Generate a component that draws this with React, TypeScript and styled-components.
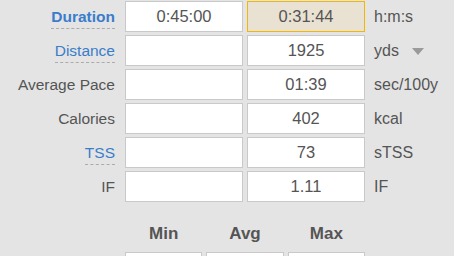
import React from "react";
import styled, { createGlobalStyle } from "styled-components";

const GlobalStyle = createGlobalStyle`
  body {
    margin: 0;
    background: #e4e4e4;
    font-family: "Liberation Sans", Arial, sans-serif;
    overflow: hidden;
  }
`;

const Page = styled.div`
  width: 454px;
  height: 256px;
  padding-top: 1px;
  box-sizing: border-box;
  color: #555;
  overflow: hidden;
`;

const Grid = styled.div`
  display: grid;
  grid-template-columns: 121px 118px 118px 1fr;
  column-gap: 4px;
  row-gap: 3px;
  align-items: center;
`;

const Label = styled.span<{ $link?: boolean; $bold?: boolean }>`
  justify-self: end;
  margin-right: 6px;
  font-size: 15.5px;
  color: ${(p) => (p.$link ? "#3a7dcb" : "#555")};
  font-weight: ${(p) => (p.$bold ? 700 : 400)};
  border-bottom: ${(p) => (p.$link ? "1px dashed #ababab" : "none")};
  padding-bottom: ${(p) => (p.$link ? "2px" : "0")};
  margin-top: ${(p) => (p.$link ? "3px" : "0")};
`;

const Field = styled.div<{ $active?: boolean }>`
  height: 31px;
  box-sizing: border-box;
  border: 1px solid ${(p) => (p.$active ? "#f2b705" : "#c9c9c9")};
  background: ${(p) => (p.$active ? "#e9e1d1" : "#fff")};
  display: flex;
  align-items: center;
  justify-content: center;
  font-size: 16.5px;
  color: #555;
`;

const Unit = styled.span`
  margin-left: 5px;
  font-size: 16px;
  color: #555;
  display: flex;
  align-items: center;
  gap: 13px;
`;

const Caret = styled.span`
  width: 0;
  height: 0;
  border-left: 6px solid transparent;
  border-right: 6px solid transparent;
  border-top: 7px solid #9a9a9a;
  margin-top: 2px;
`;

const Minmax = styled.div`
  display: grid;
  grid-template-columns: repeat(3, 1fr);
  column-gap: 4px;
  width: 240px;
  margin-left: 125px;
  margin-top: 22px;
`;

const Head = styled.div`
  text-align: center;
  font-size: 17px;
  font-weight: 700;
  color: #555;
  height: 20px;
`;

const SmallField = styled(Field)`
  margin-top: 8px;
`;

type Row = {
  label: string;
  link?: boolean;
  bold?: boolean;
  planned: string;
  actual: string;
  unit: string;
  active?: boolean;
  caret?: boolean;
};

const rows: Row[] = [
  { label: "Duration", link: true, bold: true, planned: "0:45:00", actual: "0:31:44", unit: "h:m:s", active: true },
  { label: "Distance", link: true, planned: "", actual: "1925", unit: "yds", caret: true },
  { label: "Average Pace", planned: "", actual: "01:39", unit: "sec/100y" },
  { label: "Calories", planned: "", actual: "402", unit: "kcal" },
  { label: "TSS", link: true, planned: "", actual: "73", unit: "sTSS" },
  { label: "IF", planned: "", actual: "1.11", unit: "IF" },
];

export default function App() {
  return (
    <Page>
      <GlobalStyle />
      <Grid>
        {rows.map((r) => (
          <React.Fragment key={r.label}>
            <Label $link={r.link} $bold={r.bold}>
              {r.label}
            </Label>
            <Field>{r.planned}</Field>
            <Field $active={r.active}>{r.actual}</Field>
            <Unit>
              {r.unit}
              {r.caret && <Caret />}
            </Unit>
          </React.Fragment>
        ))}
      </Grid>
      <Minmax>
        <Head>Min</Head>
        <Head>Avg</Head>
        <Head>Max</Head>
        <SmallField />
        <SmallField />
        <SmallField />
      </Minmax>
    </Page>
  );
}
